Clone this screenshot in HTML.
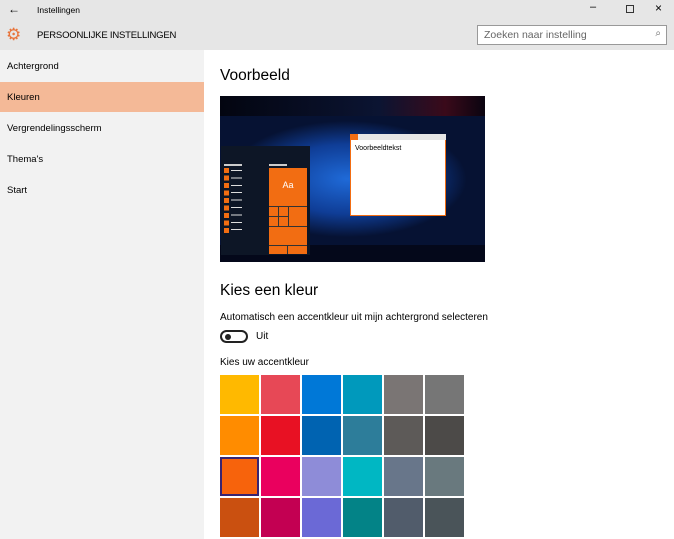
<!DOCTYPE html>
<html><head><style>
*{margin:0;padding:0;box-sizing:border-box}
body{width:674px;height:539px;overflow:hidden;background:#fff;font-family:"Liberation Sans",sans-serif;position:relative;color:#000}
.a{position:absolute}
.sw{position:absolute;width:39px;height:39px}
</style></head><body>
<div class="a" style="left:0;top:0;width:674px;height:50px;background:#e6e6e6"></div>
<div class="a" style="left:8px;top:2px;font-size:12px">&#8592;</div>
<div class="a" style="left:37px;top:5px;font-size:8.5px">Instellingen</div>
<div class="a" style="left:590px;top:1px;font-size:11px">&#8211;</div>
<div class="a" style="left:626px;top:5px;width:8px;height:8px;border:1px solid #333"></div>
<div class="a" style="left:655px;top:1px;font-size:12px">&#215;</div>
<div class="a" style="left:6px;top:26px;color:#e8743b;font-size:17px;line-height:17px">&#9881;</div>
<div class="a" style="left:37px;top:30px;font-size:9.5px;letter-spacing:-0.2px">PERSOONLIJKE INSTELLINGEN</div>
<div class="a" style="left:477px;top:25px;width:190px;height:20px;background:#fff;border:1px solid #999;font-size:10.5px;color:#666;padding:3px 6px">Zoeken naar instelling<span style="position:absolute;right:5px;top:2px;font-size:10px">&#8981;</span></div>
<div class="a" style="left:0;top:50px;width:204px;height:489px;background:#f2f2f2"></div>
<div class="a" style="left:0;top:82px;width:204px;height:30px;background:#f4b997"></div>
<div class="a" style="left:7px;top:61px;font-size:9.5px">Achtergrond</div>
<div class="a" style="left:7px;top:92px;font-size:9.5px">Kleuren</div>
<div class="a" style="left:7px;top:123px;font-size:9.5px">Vergrendelingsscherm</div>
<div class="a" style="left:7px;top:154px;font-size:9.5px">Thema's</div>
<div class="a" style="left:7px;top:185px;font-size:9.5px">Start</div>
<div class="a" style="left:220px;top:67px;font-size:15.5px">Voorbeeld</div>
<div class="a" style="left:220px;top:96px;width:265px;height:166px;background:radial-gradient(ellipse 45% 35% at 48% 50%,#1f6ad8,#0f3d96 60%,#061233 100%);"></div>
<div class="a" style="left:220px;top:96px;width:265px;height:20px;background:linear-gradient(90deg,#030510,#0b1432 60%,#3a0a1a 85%,#0a0410)"></div>
<div class="a" style="left:220px;top:245px;width:265px;height:17px;background:#04081a"></div>
<div class="a" style="left:221px;top:146px;width:89px;height:109px;background:#0d1626"></div>
<div class="a" style="left:224px;top:164px;width:18px;height:2px;background:#ccc"></div>
<div class="a" style="left:269px;top:164px;width:18px;height:2px;background:#ccc"></div>
<div class="a" style="left:224px;top:168px;width:5px;height:67px;background:repeating-linear-gradient(#f26d12 0 5px,#0d1626 5px 7.5px)"></div>
<div class="a" style="left:231px;top:170px;width:11px;height:65px;background:repeating-linear-gradient(#ddd 0 1px,transparent 1px 7.4px)"></div>
<div class="a" style="left:269px;top:168px;width:38px;height:86px;background:#f26d12"></div>
<div class="a" style="left:269px;top:180px;width:38px;text-align:center;color:#fff;font-size:9px">Aa</div>
<div class="a" style="left:269px;top:206px;width:38px;height:1px;background:#333"></div>
<div class="a" style="left:269px;top:226px;width:38px;height:1px;background:#333"></div>
<div class="a" style="left:269px;top:245px;width:38px;height:1px;background:#333"></div>
<div class="a" style="left:288px;top:206px;width:1px;height:20px;background:#333"></div>
<div class="a" style="left:278px;top:206px;width:1px;height:20px;background:#333"></div>
<div class="a" style="left:269px;top:216px;width:19px;height:1px;background:#333"></div>
<div class="a" style="left:287px;top:245px;width:1px;height:9px;background:#333"></div>
<div class="a" style="left:350px;top:134px;width:96px;height:82px;background:#fff;border:1px solid #f26d12"></div>
<div class="a" style="left:350px;top:134px;width:96px;height:6px;background:#e6e6e6"></div>
<div class="a" style="left:350px;top:134px;width:8px;height:6px;background:#f26d12"></div>
<div class="a" style="left:355px;top:145px;font-size:7px">Voorbeeldtekst</div>
<div class="a" style="left:220px;top:282px;font-size:15.5px">Kies een kleur</div>
<div class="a" style="left:220px;top:312px;font-size:10px">Automatisch een accentkleur uit mijn achtergrond selecteren</div>
<div class="a" style="left:220px;top:330px;width:28px;height:13px;border:2px solid #222;border-radius:7px"></div>
<div class="a" style="left:225px;top:334px;width:6px;height:6px;border-radius:50%;background:#222"></div>
<div class="a" style="left:256px;top:331px;font-size:10px">Uit</div>
<div class="a" style="left:220px;top:357px;font-size:10px">Kies uw accentkleur</div>
<div class="sw" style="left:220px;top:375px;background:#ffb900"></div>
<div class="sw" style="left:261px;top:375px;background:#e74856"></div>
<div class="sw" style="left:302px;top:375px;background:#0078d7"></div>
<div class="sw" style="left:343px;top:375px;background:#0099bc"></div>
<div class="sw" style="left:384px;top:375px;background:#7a7574"></div>
<div class="sw" style="left:425px;top:375px;background:#767676"></div>
<div class="sw" style="left:220px;top:416px;background:#ff8c00"></div>
<div class="sw" style="left:261px;top:416px;background:#e81123"></div>
<div class="sw" style="left:302px;top:416px;background:#0063b1"></div>
<div class="sw" style="left:343px;top:416px;background:#2d7d9a"></div>
<div class="sw" style="left:384px;top:416px;background:#5d5a58"></div>
<div class="sw" style="left:425px;top:416px;background:#4c4a48"></div>
<div class="sw" style="left:220px;top:457px;background:#f7630c;border:2px solid #3a2470"></div>
<div class="sw" style="left:261px;top:457px;background:#ea005e"></div>
<div class="sw" style="left:302px;top:457px;background:#8e8cd8"></div>
<div class="sw" style="left:343px;top:457px;background:#00b7c3"></div>
<div class="sw" style="left:384px;top:457px;background:#68768a"></div>
<div class="sw" style="left:425px;top:457px;background:#69797e"></div>
<div class="sw" style="left:220px;top:498px;background:#ca5010"></div>
<div class="sw" style="left:261px;top:498px;background:#c30052"></div>
<div class="sw" style="left:302px;top:498px;background:#6b69d6"></div>
<div class="sw" style="left:343px;top:498px;background:#038387"></div>
<div class="sw" style="left:384px;top:498px;background:#515c6b"></div>
<div class="sw" style="left:425px;top:498px;background:#4a5459"></div>
</body></html>
